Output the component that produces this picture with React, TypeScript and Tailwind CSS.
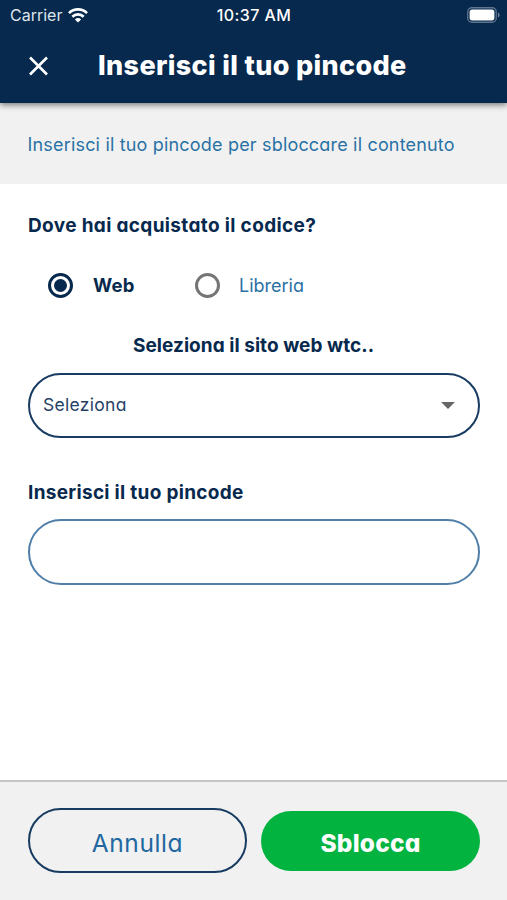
import React from "react";

function StatusBar() {
  return (
    <div className="grid h-[30px] grid-cols-3 items-center pl-[10px] pr-[7px] text-[16px] leading-[30px] [font-feature-settings:normal]">
      <div className="flex items-center gap-[6px]">
        <span className="w-[52px] text-[#dfe5ec]">Carrier</span>
        <svg width="20" height="15" viewBox="0 0 20 15" fill="none" stroke="#fff" strokeWidth="2.7">
          <path d="M1 5.1a12.9 12.9 0 0 1 18 0" />
          <path d="M4.3 8.7a8.2 8.2 0 0 1 11.4 0" />
          <path d="M10 14.6 6.9 11.4a4.5 4.5 0 0 1 6.2 0Z" fill="#fff" stroke="none" />
        </svg>
      </div>
      <span className="-ml-[2px] whitespace-nowrap text-center font-medium tracking-[0.4px]">10:37 AM</span>
      <svg className="justify-self-end" width="33" height="16" viewBox="0 0 33 16" fill="none">
        <rect x="0.75" y="0.75" width="28.5" height="14.5" rx="4.2" stroke="#5f7490" strokeWidth="1.3" />
        <rect x="2.6" y="2.6" width="24.8" height="10.8" rx="2.6" fill="#fff" />
        <path d="M31 5.5v5c1-.4 1.5-1.4 1.5-2.5S32 5.9 31 5.5Z" fill="#7788a0" />
      </svg>
    </div>
  );
}

function Radio({ checked }: { checked?: boolean }) {
  return (
    <span
      className={
        checked
          ? "flex size-[25px] items-center justify-center rounded-full border-[3px] border-[#06294d]"
          : "flex size-[25px] items-center justify-center rounded-full border-[3px] border-[#757575]"
      }
    >
      {checked && <span className="size-[13px] rounded-full bg-[#06294d]" />}
    </span>
  );
}

export default function App() {
  return (
    <div className="flex h-[900px] w-[507px] flex-col overflow-hidden bg-white font-['Inter',sans-serif] text-[#06294d] [font-feature-settings:'cv11']">
      <header className="relative z-10 h-[103px] shrink-0 bg-[#06294d] text-white shadow-[0_2px_6px_rgba(0,0,0,0.5)]">
        <StatusBar />
        <div className="flex h-[71px] items-center pl-[29px]">
          <svg width="19" height="20" viewBox="0 0 19 20" stroke="#fff" strokeWidth="2.6">
            <path d="M1 1.5 18 18.5M18 1.5 1 18.5" />
          </svg>
          <h1 className="ml-[50px] whitespace-nowrap pt-px text-[27px] font-extrabold tracking-[0.35px]">Inserisci il tuo pincode</h1>
        </div>
      </header>

      <div className="flex h-[81px] shrink-0 items-center bg-[#f1f1f1] pl-[27.5px] pt-px">
        <p className="whitespace-nowrap text-[18px] tracking-[0.18px] text-[#2a71a5]">Inserisci il tuo pincode per sbloccare il contenuto</p>
      </div>

      <main className="flex flex-1 flex-col px-[27px] pt-[28px]">
        <h2 className="pl-px text-[19px] font-bold leading-[28px] tracking-[0.35px]">Dove hai acquistato il codice?</h2>
        <div className="mt-[33px] flex h-[25px] items-center pl-[21px]">
          <Radio checked />
          <span className="ml-[20px] w-[102px] text-[18.5px] font-bold tracking-[0.2px]">Web</span>
          <Radio />
          <span className="ml-[19px] text-[18px] text-[#2a71a5]">Libreria</span>
        </div>
        <h2 className="mt-[34px] text-center text-[19px] font-bold leading-[28px] tracking-[0.05px]">Seleziona il sito web wtc..</h2>
        <div className="ml-px mt-[13px] flex h-[65px] shrink-0 items-center justify-between rounded-full border-2 border-[#173b61] pl-[13px] pr-[23px]">
          <span className="text-[17.5px] tracking-[0.3px] text-[#263f64]">Seleziona</span>
          <svg width="14" height="7" viewBox="0 0 14 7" fill="#666">
            <path d="M0 0h14L7 7Z" />
          </svg>
        </div>
        <h2 className="mt-[41px] pl-px text-[19px] font-bold leading-[28px] tracking-[0.3px]">Inserisci il tuo pincode</h2>
        <div className="ml-px mt-[12px] h-[66px] shrink-0 rounded-full border-2 border-[#4f7fa9]" />
      </main>

      <footer className="flex h-[120px] shrink-0 items-center gap-[14px] border-t-2 border-[#c3c5c6] bg-[#f1f1f1] pl-[28px] pr-[27px]">
        <button className="mb-[2px] h-[65px] w-[219px] rounded-full border-2 border-[#173b61] pt-[6px] text-[24.5px] tracking-[0.6px] text-[#2167a0]">Annulla</button>
        <button className="h-[60px] flex-1 rounded-full bg-[#02b340] pt-[4px] text-[24.5px] font-extrabold tracking-[0.2px] text-white">Sblocca</button>
      </footer>
    </div>
  );
}
